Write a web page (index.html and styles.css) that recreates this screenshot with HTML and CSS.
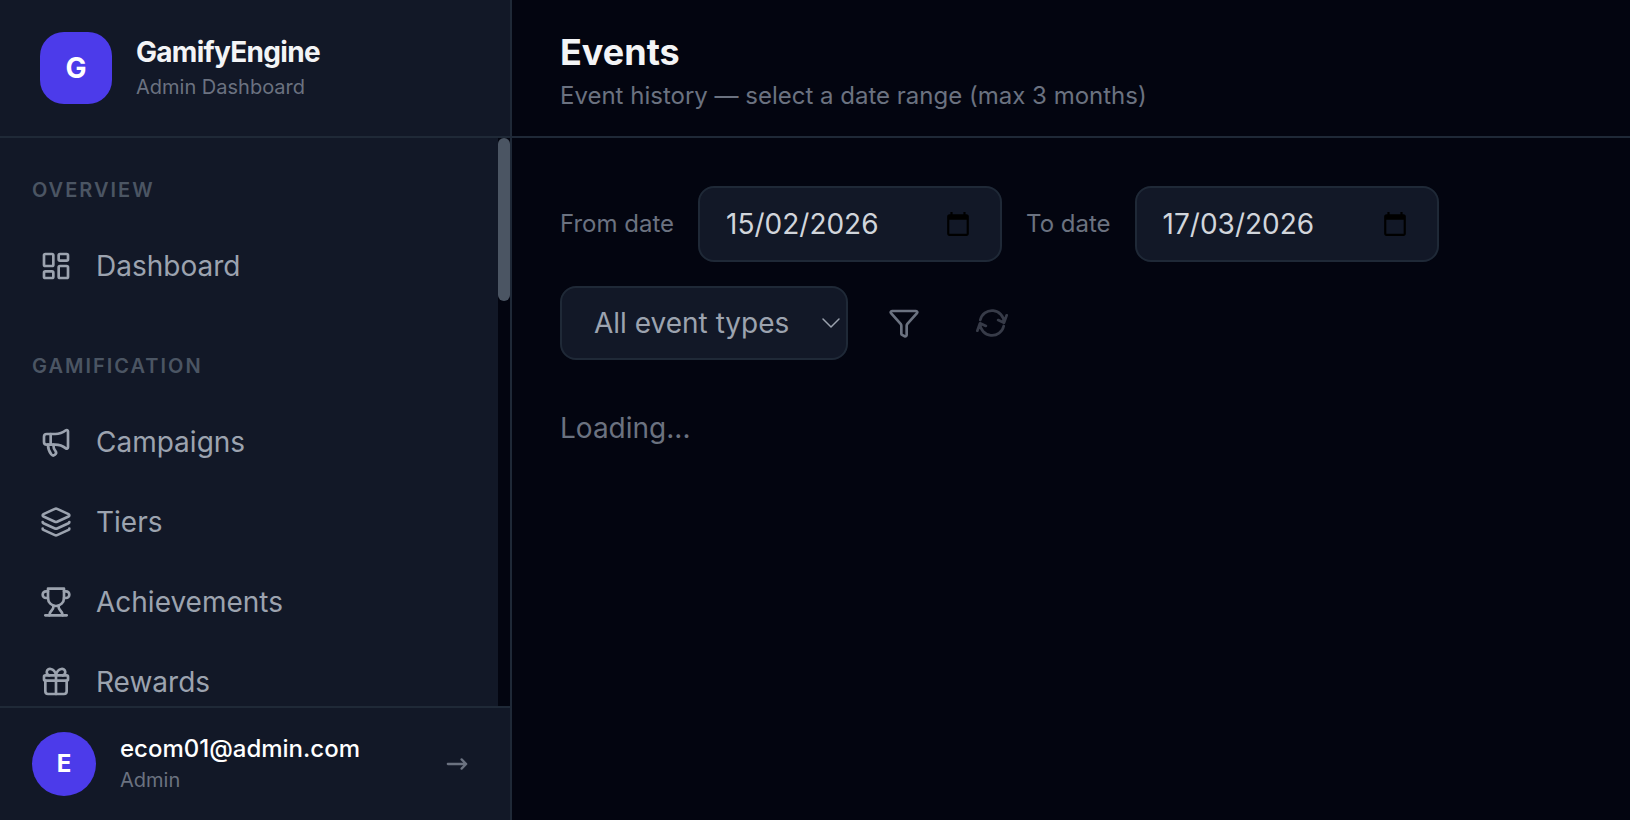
FILE: index.html
```
<!DOCTYPE html>
<html lang="en">
<head>
    <meta charset="UTF-8">
    <title>Events - GamifyEngine</title>
    <link rel="stylesheet" href="styles.css">
</head>
<body>
    <div class="app">
        <aside class="sidebar">
            <div class="brand">
                <div class="logo">G</div>
                <div>
                    <div class="brand-name">GamifyEngine</div>
                    <div class="brand-sub">Admin Dashboard</div>
                </div>
            </div>

            <div class="nav-wrap">
                <nav class="nav">
                    <section class="nav-section">
                        <h2>Overview</h2>
                        <a href="#dashboard">
                            <svg class="icon" viewBox="0 0 24 24"><rect x="3" y="3" width="7" height="9" rx="1"/><rect x="14" y="3" width="7" height="5" rx="1"/><rect x="14" y="12" width="7" height="9" rx="1"/><rect x="3" y="16" width="7" height="5" rx="1"/></svg>
                            Dashboard
                        </a>
                    </section>
                    <section class="nav-section">
                        <h2>Gamification</h2>
                        <a href="#campaigns">
                            <svg class="icon" viewBox="0 0 24 24"><path d="M11 6a13 13 0 0 0 8.4-2.8A1 1 0 0 1 21 4v12a1 1 0 0 1-1.6.8A13 13 0 0 0 11 14H5a2 2 0 0 1-2-2V8a2 2 0 0 1 2-2z"/><path d="M6 14a12 12 0 0 0 2.4 7.2 2 2 0 0 0 3.2-2.4A8 8 0 0 1 10 14"/><path d="M8 6v8"/></svg>
                            Campaigns
                        </a>
                        <a href="#tiers">
                            <svg class="icon" viewBox="0 0 24 24"><path d="M12.83 2.18a2 2 0 0 0-1.66 0L2.6 6.08a1 1 0 0 0 0 1.83l8.58 3.91a2 2 0 0 0 1.66 0l8.58-3.9a1 1 0 0 0 0-1.83z"/><path d="M2 12a1 1 0 0 0 .58.91l8.6 3.91a2 2 0 0 0 1.65 0l8.58-3.9A1 1 0 0 0 22 12"/><path d="M2 17a1 1 0 0 0 .58.91l8.6 3.91a2 2 0 0 0 1.65 0l8.58-3.9A1 1 0 0 0 22 17"/></svg>
                            Tiers
                        </a>
                        <a href="#achievements">
                            <svg class="icon" viewBox="0 0 24 24"><path d="M6 9H4.500a2.500 2.500 0 0 1 0-5H6"/><path d="M18 9h1.500a2.500 2.500 0 0 0 0-5H18"/><path d="M4 22h16"/><path d="M10 14.660V16c0 .8-.5 1.500-1 2C7.800 19.200 7 20.500 7 22"/><path d="M14 14.660V16c0 .8.5 1.500 1 2 1.200 1.200 2 2.500 2 4"/><path d="M18 2H6v7a6 6 0 0 0 12 0V2z"/></svg>
                            Achievements
                        </a>
                        <a href="#rewards">
                            <svg class="icon" viewBox="0 0 24 24"><rect x="3" y="7" width="18" height="4" rx="1"/><path d="M12 7v14"/><path d="M20 11v8a2 2 0 0 1-2 2H6a2 2 0 0 1-2-2v-8"/><path d="M7 7a2.400 2.400 0 0 1 1-4.800A5 6 0 0 1 12 6.500a5 6 0 0 1 4-4.300A2.400 2.400 0 0 1 17 7"/></svg>
                            Rewards
                        </a>
                    </section>
                </nav>
                <div class="scrollbar" aria-hidden="true"><div class="thumb"></div></div>
            </div>

            <div class="user">
                <div class="avatar">E</div>
                <div class="user-info">
                    <div class="user-email">ecom01@admin.com</div>
                    <div class="user-role">Admin</div>
                </div>
                <button class="logout" type="button" aria-label="Log out">
                    <svg viewBox="0 0 24 24"><path d="M2 12h20M17 7l5 5-5 5"/></svg>
                </button>
            </div>
        </aside>

        <main class="main">
            <header class="page-header">
                <h1>Events</h1>
                <p>Event history — select a date range (max 3 months)</p>
            </header>

            <div class="content">
                <form class="filters">
                    <label for="from">From date</label>
                    <div class="field date-field">
                        <input type="text" id="from" value="15/02/2026">
                        <button type="button" aria-label="Open calendar">
                            <svg viewBox="0 0 24 24"><path d="M20 3h-1V1h-2v2H7V1H5v2H4c-1.100 0-2 .9-2 2v16c0 1.100.9 2 2 2h16c1.100 0 2-.9 2-2V5c0-1.100-.9-2-2-2zm0 18H4V8h16v13z"/></svg>
                        </button>
                    </div>
                    <label for="to">To date</label>
                    <div class="field date-field">
                        <input type="text" id="to" value="17/03/2026">
                        <button type="button" aria-label="Open calendar">
                            <svg viewBox="0 0 24 24"><path d="M20 3h-1V1h-2v2H7V1H5v2H4c-1.100 0-2 .9-2 2v16c0 1.100.9 2 2 2h16c1.100 0 2-.9 2-2V5c0-1.100-.9-2-2-2zm0 18H4V8h16v13z"/></svg>
                        </button>
                    </div>
                    <div class="field select-field">
                        <select id="type" aria-label="Event type">
                            <option>All event types</option>
                        </select>
                        <svg viewBox="0 0 18 10"><path d="M1 1l8 8 8-8"/></svg>
                    </div>
                    <button class="icon-btn" type="button" aria-label="Filter">
                        <svg class="icon" viewBox="0 0 24 24"><path d="M10 20a1 1 0 0 0 .553.895l2 1A1 1 0 0 0 14 21v-7a2 2 0 0 1 .517-1.341L21.740 4.670A1 1 0 0 0 21 3H3a1 1 0 0 0-.742 1.670l7.225 7.989A2 2 0 0 1 10 14z"/></svg>
                    </button>
                    <button class="icon-btn" type="button" aria-label="Refresh" disabled>
                        <svg class="icon" viewBox="0 0 24 24"><path d="M3.200 9.800A9 9 0 0 1 21 11.600M16.600 9.800l4.400 2 2-5.600"/><path d="M20.800 14.200A9 9 0 0 1 3 12.400M7.400 14.200l-4.400-2-2 5.600"/></svg>
                    </button>
                </form>

                <p class="loading">Loading...</p>
            </div>
        </main>
    </div>
</body>
</html>
```
FILE: styles.css
```
* { box-sizing: border-box; }
body { margin: 0; font-family: Inter, "Liberation Sans", sans-serif; font-size: 28px; line-height: 40px; background: #030510; color: #f3f4f6; }
h1, h2, p { margin: 0; }
button, input, select { font: inherit; color: inherit; background: none; border: none; padding: 0; margin: 0; }
button { cursor: pointer; }
svg { display: block; flex-shrink: 0; overflow: visible; fill: none; stroke: currentColor; stroke-linecap: round; stroke-linejoin: round; }
.icon { width: 32px; height: 32px; stroke-width: 2; }

.app { display: flex; height: 100vh; }

/* Sidebar */
.sidebar { display: flex; flex-direction: column; flex: 0 0 512px; background: #121827; border-right: 2px solid #1f2937; }
.brand { display: flex; align-items: center; gap: 24px; height: 138px; padding: 0 40px; border-bottom: 2px solid #1f2937; }
.logo { display: flex; align-items: center; justify-content: center; width: 72px; height: 72px; border-radius: 24px; background: #4c3bea; color: #fff; font-weight: 700; }
.brand-name { padding-top: 2px; font-weight: 700; line-height: 36px; letter-spacing: -0.025em; }
.brand-sub { font-size: 20px; line-height: 34px; color: #6b7280; }

.nav-wrap { display: flex; flex: 1; min-height: 0; }
.nav { flex: 1; padding: 38px 16px 0; overflow: hidden; }
.nav-section { display: flex; flex-direction: column; gap: 4px; margin-bottom: 48px; }
.nav h2 { padding: 0 16px; margin-bottom: 20px; font-size: 20px; line-height: 28px; font-weight: 600; letter-spacing: 2px; text-transform: uppercase; color: #4b5563; }
.nav a { display: flex; align-items: center; gap: 24px; height: 76px; padding: 0 24px; color: #9ca3af; text-decoration: none; }
.scrollbar { width: 12px; background: #030510; }
.thumb { height: 163px; border-radius: 6px; background: #4b5563; }

.user { display: flex; align-items: center; gap: 24px; padding: 24px 42px 24px 32px; border-top: 2px solid #1f2937; }
.avatar { display: flex; align-items: center; justify-content: center; width: 64px; height: 64px; border-radius: 50%; background: #4c3bea; color: #fff; font-size: 24px; font-weight: 700; }
.user-info { flex: 1; }
.user-email { font-size: 24px; line-height: 32px; font-weight: 500; color: #fff; }
.user-role { font-size: 20px; line-height: 30px; color: #6b7280; }
.logout { color: #6b7280; }
.logout svg { width: 22px; height: 24px; stroke-width: 2.5; }

/* Page */
.main { flex: 1; min-width: 0; }
.page-header { height: 138px; padding: 28px 48px 0; border-bottom: 2px solid #1f2937; }
.page-header h1 { font-size: 36px; line-height: 48px; font-weight: 700; }
.page-header p { font-size: 24px; line-height: 40px; color: #6b7280; }
.content { padding: 48px; }

.filters { display: flex; flex-wrap: wrap; align-items: center; gap: 24px; max-width: 960px; }
.filters label { font-size: 24px; color: #6b7280; }
.field { display: flex; align-items: center; border: 2px solid #1f2937; border-radius: 16px; background: #121827; }
.date-field { width: 304px; height: 76px; padding: 0 28px 0 26px; color: #d1d5db; }
.date-field input { flex: 1; width: 0; }
.date-field svg { width: 28px; height: 26px; fill: #000; stroke: none; }
.select-field { position: relative; width: 288px; height: 74px; color: #9ca3af; }
.select-field select { width: 100%; height: 100%; padding: 0 32px; appearance: none; }
.select-field svg { position: absolute; right: 6px; width: 18px; height: 10px; stroke-width: 1.5; pointer-events: none; }
.icon-btn { display: flex; align-items: center; justify-content: center; width: 64px; height: 64px; color: #6b7280; }
.icon-btn:disabled { opacity: 0.5; }

.loading { margin-top: 48px; color: #6b7280; }
```
